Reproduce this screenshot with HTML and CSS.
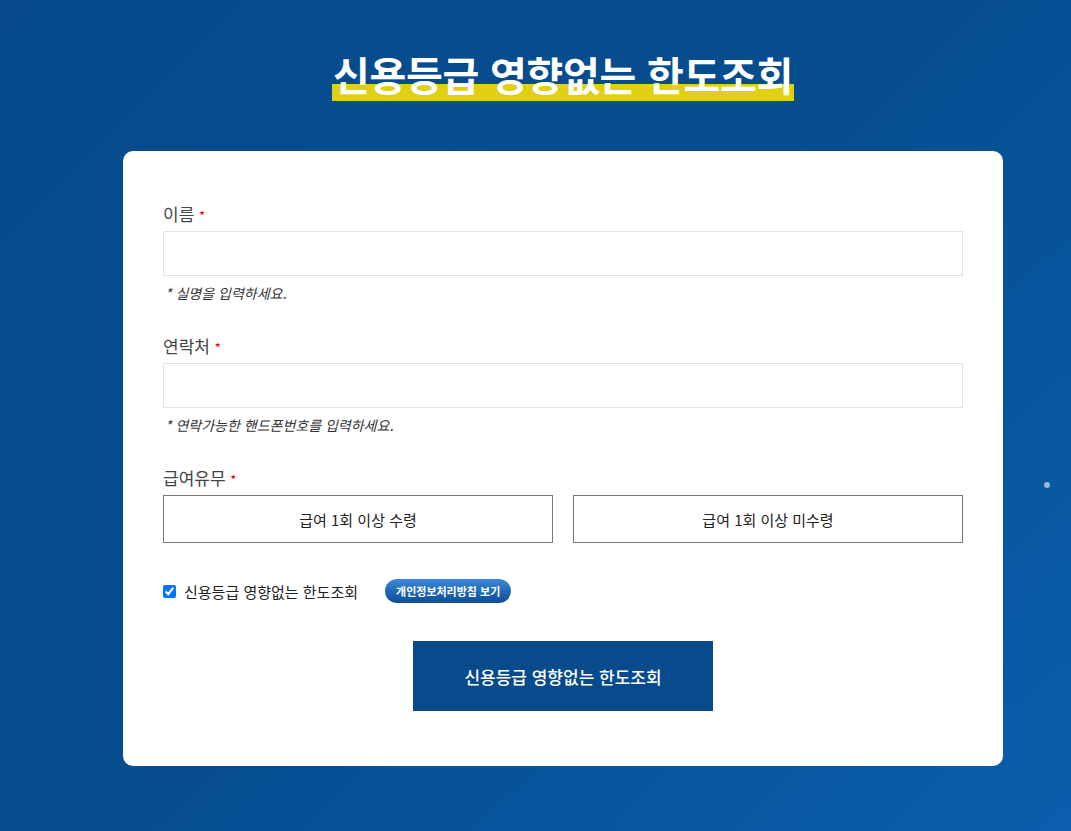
FILE: index.html
```html
<!DOCTYPE html>
<html lang="ko">
<head>
<meta charset="utf-8">
<link rel="stylesheet" href="styles.css">
</head>
<body>
<div class="page">
  <h1 class="title"><span class="title-text">신용등급 영향없는 한도조회</span></h1>
  <div class="card">
    <div class="field">
      <label class="label">이름 <span class="req">*</span></label>
      <input class="input" type="text">
      <p class="help">* 실명을 입력하세요.</p>
    </div>
    <div class="field">
      <label class="label">연락처 <span class="req">*</span></label>
      <input class="input" type="text">
      <p class="help">* 연락가능한 핸드폰번호를 입력하세요.</p>
    </div>
    <div class="field">
      <label class="label">급여유무 <span class="req">*</span></label>
      <div class="choices">
        <button class="choice">급여 1회 이상 수령</button>
        <button class="choice">급여 1회 이상 미수령</button>
      </div>
    </div>
    <div class="agree">
      <input type="checkbox" class="check" checked>
      <span class="agree-text">신용등급 영향없는 한도조회</span>
      <span class="badge">개인정보처리방침 보기</span>
    </div>
    <div class="submit-row">
      <button class="submit">신용등급 영향없는 한도조회</button>
    </div>
  </div>
  <span class="dot"></span>
</div>
</body>
</html>
```
FILE: styles.css
```css
html, body {
  margin: 0;
  padding: 0;
  height: 100%;
}
body {
  font-family: "Noto Sans CJK KR", "Noto Sans", sans-serif;
  background: linear-gradient(135deg, #064a8b 0%, #064d90 50%, #0a5ead 100%);
  min-height: 831px;
  overflow: hidden;
}
.page {
  position: relative;
  width: 1071px;
  height: 831px;
  box-sizing: border-box;
  padding-left: 55px;
  display: flex;
  flex-direction: column;
  align-items: center;
}
.title {
  margin: 47px 0 0 0;
  height: 104px;
  font-size: 40px;
  font-weight: 700;
  color: #fff;
  line-height: 54px;
  letter-spacing: -0.3px;
}
.title-text {
  display: inline-block;
  padding: 0 1px;
  background: linear-gradient(to bottom, transparent 0, transparent 37px, #e0cf12 37px, #e0cf12 54px);
}
.card {
  width: 880px;
  box-sizing: border-box;
  background: #fff;
  border-radius: 10px;
  padding: 51px 40px 55px 40px;
}
.field {
  margin-bottom: 30px;
}
.label {
  display: block;
  font-size: 17px;
  color: #444;
  line-height: 24px;
  margin-bottom: 3px;
}
.req {
  color: #d00;
  font-size: 13px;
}
.input {
  display: block;
  width: 100%;
  box-sizing: border-box;
  height: 45px;
  border: 1px solid #e2e2e2;
  margin: 0;
}
.help {
  margin: 6px 0 0 2px;
  font-size: 14px;
  font-style: italic;
  color: #333;
  line-height: 22px;
}
.choices {
  display: flex;
  gap: 20px;
  margin-top: 2px;
}
.choice {
  flex: 1;
  height: 48px;
  background: #fff;
  border: 1px solid #777;
  font-family: "Noto Sans CJK KR", sans-serif;
  font-size: 15px;
  color: #222;
}
.agree {
  display: flex;
  align-items: center;
  margin-top: 35px;
  height: 26px;
}
.check {
  margin: 0 8px 0 0;
  width: 13px;
  height: 13px;
}
.agree-text {
  font-size: 15px;
  color: #222;
}
.badge {
  margin-left: 27px;
  padding: 0 11px;
  height: 24px;
  line-height: 24px;
  border-radius: 12px;
  font-size: 11px;
  font-weight: 700;
  color: #fff;
  background: linear-gradient(to bottom, #3d8ad8 0%, #1c63b0 60%, #0f4f95 100%);
}
.submit-row {
  display: flex;
  justify-content: center;
  margin-top: 37px;
}
.submit {
  width: 300px;
  height: 70px;
  border: 0;
  background: #074b8c;
  color: #fff;
  font-family: "Noto Sans CJK KR", sans-serif;
  font-size: 17px;
  font-weight: 500;
}
.dot {
  position: absolute;
  left: 1044px;
  top: 482px;
  width: 6px;
  height: 6px;
  border-radius: 50%;
  background: #9bb5d6;
}
```
